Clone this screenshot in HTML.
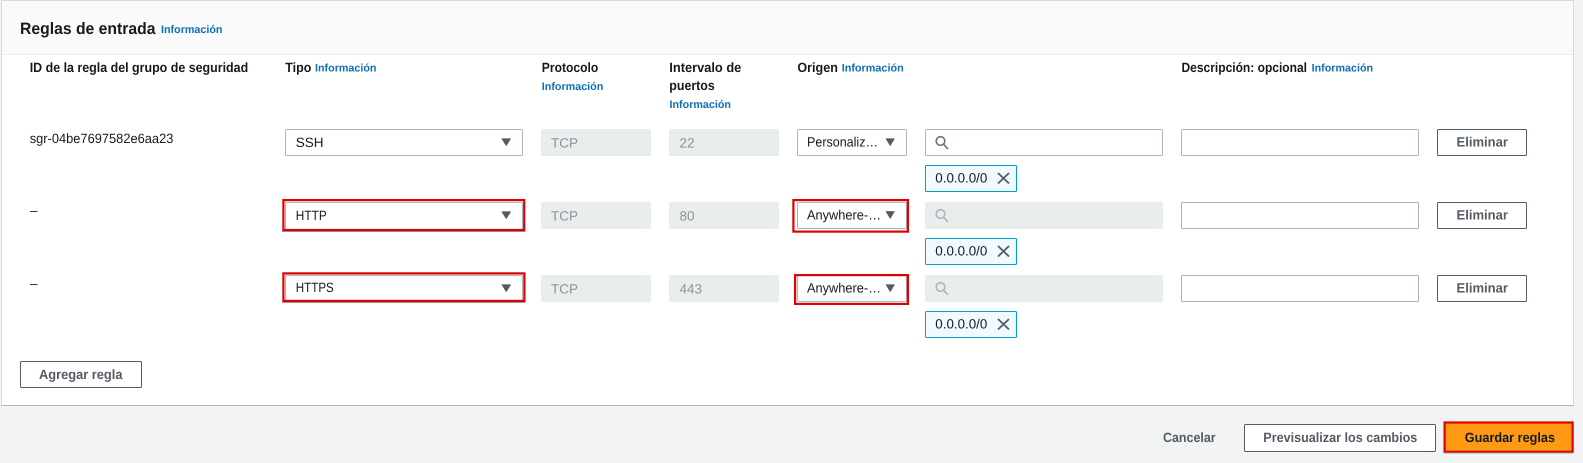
<!DOCTYPE html>
<html lang="es"><head><meta charset="utf-8"><title>Reglas de entrada</title>
<style>
html,body{margin:0;padding:0;width:1583px;height:463px;overflow:hidden;background:#f2f3f3}
svg{display:block}
text{font-family:"Liberation Sans",sans-serif;font-size:13.5px;fill:#16191f;text-rendering:geometricPrecision}
.b{font-weight:700}
.i{font-size:11px;font-weight:700;fill:#0f6fb5}
.d{fill:#879596}
.btn{font-weight:700;fill:#545b64}
.box{fill:#fff;stroke:#aab7b8;stroke-width:1}
.dis{fill:#eaeded}
.bt{fill:#fff;stroke:#545b64;stroke-width:1}
.red{fill:none;stroke:#df0000;stroke-width:2.2}
.chip{fill:#f1faff;stroke:#00a1c9;stroke-width:1}
.x{stroke:#545b64;stroke-width:1.8;fill:none}
.s{fill:none;stroke:#687078;stroke-width:1.6}
.sd{fill:none;stroke:#aab7b8;stroke-width:1.6}
.a{fill:#545b64;stroke:#545b64;stroke-width:.8;stroke-linejoin:round}
</style></head><body>
<svg width="1583" height="463" viewBox="0 0 1583 463" xmlns="http://www.w3.org/2000/svg">
<rect width="1583" height="463" fill="#f2f3f3"/>
<rect x="1.5" y="0.5" width="1572" height="405" fill="#fff" stroke="#d5dbdb"/>
<rect x="2" y="1" width="1571" height="53.5" fill="#fafafa"/>
<rect x="2" y="54" width="1571" height="1" fill="#eaeded"/>
<rect x="1" y="405" width="1573" height="1" fill="#aab7b8"/>

<text x="20" y="34" class="b" style="font-size:16.5px" textLength="135.5" lengthAdjust="spacingAndGlyphs">Reglas de entrada</text>
<text x="161" y="33" class="i" textLength="61.5" lengthAdjust="spacingAndGlyphs">Información</text>

<text x="29.7" y="72" class="b" textLength="218.5" lengthAdjust="spacingAndGlyphs">ID de la regla del grupo de seguridad</text>
<text x="285.3" y="72" class="b" textLength="26" lengthAdjust="spacingAndGlyphs">Tipo</text>
<text x="315" y="71.5" class="i" textLength="61.5" lengthAdjust="spacingAndGlyphs">Información</text>
<text x="541.8" y="72" class="b" textLength="56.5" lengthAdjust="spacingAndGlyphs">Protocolo</text>
<text x="541.8" y="90" class="i" textLength="61.5" lengthAdjust="spacingAndGlyphs">Información</text>
<text x="669.3" y="72" class="b" textLength="72" lengthAdjust="spacingAndGlyphs">Intervalo de</text>
<text x="669.3" y="90" class="b" textLength="45.5" lengthAdjust="spacingAndGlyphs">puertos</text>
<text x="669.5" y="108" class="i" textLength="61.5" lengthAdjust="spacingAndGlyphs">Información</text>
<text x="797.4" y="72" class="b" textLength="40.5" lengthAdjust="spacingAndGlyphs">Origen</text>
<text x="841.7" y="71.5" class="i" textLength="62" lengthAdjust="spacingAndGlyphs">Información</text>
<text x="1181.5" y="72" class="b" textLength="125.5" lengthAdjust="spacingAndGlyphs">Descripción: opcional</text>
<text x="1311.6" y="71.5" class="i" textLength="61.5" lengthAdjust="spacingAndGlyphs">Información</text>

<!-- Row 1 -->
<text x="29.7" y="143" textLength="143.7" lengthAdjust="spacingAndGlyphs">sgr-04be7697582e6aa23</text>
<rect x="285.5" y="129.5" width="237" height="26" rx="1" class="box"/>
<text x="295.8" y="147">SSH</text>
<path d="M502 138.800h8.500l-4.250 6.800z" class="a"/>
<rect x="541" y="129" width="110" height="27" rx="1" class="dis"/>
<text x="551" y="147.500" class="d">TCP</text>
<rect x="669" y="129" width="110" height="27" rx="1" class="dis"/>
<text x="679.500" y="147.500" class="d">22</text>
<rect x="797.500" y="129.500" width="109" height="26" rx="1" class="box"/>
<text x="807" y="146.500" textLength="71" lengthAdjust="spacingAndGlyphs">Personaliz…</text>
<path d="M886.200 138.800h8l-4 6.800z" class="a"/>
<rect x="925.500" y="129.500" width="237" height="26" rx="1" class="box"/>
<circle cx="940.500" cy="141" r="4.300" class="s"/><path d="M943.700 144.300L948 149" class="s"/>
<rect x="925.500" y="165.500" width="91" height="26" rx="1" class="chip"/>
<text x="935.300" y="182.500" textLength="52" lengthAdjust="spacingAndGlyphs">0.0.0.0/0</text>
<path d="M998 173l11 10.500M1009 173l-11 10.500" class="x"/>
<rect x="1181.500" y="129.500" width="237" height="26" rx="1" class="box"/>
<rect x="1437.500" y="129.500" width="89" height="26" rx="1" class="bt"/>
<text x="1456.500" y="146.500" class="btn" textLength="51.500" lengthAdjust="spacingAndGlyphs">Eliminar</text>

<!-- Row 2 -->
<text x="30" y="215">–</text>
<rect x="285.500" y="202.500" width="237" height="27" rx="1" class="box"/>
<text x="295.800" y="220" textLength="31" lengthAdjust="spacingAndGlyphs">HTTP</text>
<path d="M502 211.800h8.500l-4.250 6.800z" class="a"/>
<rect x="282" y="231" width="243.500" height="1" fill="#8d9797"/>
<rect x="283.400" y="200.100" width="240.800" height="29.900" class="red"/>
<rect x="541" y="202" width="110" height="27" rx="1" class="dis"/>
<text x="551" y="220.500" class="d">TCP</text>
<rect x="669" y="202" width="110" height="27" rx="1" class="dis"/>
<text x="679.500" y="220.500" class="d">80</text>
<rect x="797.500" y="202.500" width="109" height="26" rx="1" class="box"/>
<text x="807" y="219.500" textLength="74" lengthAdjust="spacingAndGlyphs">Anywhere-…</text>
<path d="M886.200 211.500h8l-4 6.800z" class="a"/>
<rect x="793.400" y="200.100" width="114.500" height="31.500" class="red"/>
<rect x="925" y="202" width="238" height="27" rx="1" class="dis"/>
<circle cx="940.500" cy="214" r="4.300" class="sd"/><path d="M943.700 217.300L948 222" class="sd"/>
<rect x="925.500" y="238.500" width="91" height="26" rx="1" class="chip"/>
<text x="935.300" y="255.500" textLength="52" lengthAdjust="spacingAndGlyphs">0.0.0.0/0</text>
<path d="M998 246l11 10.500M1009 246l-11 10.500" class="x"/>
<rect x="1181.500" y="202.500" width="237" height="26" rx="1" class="box"/>
<rect x="1437.500" y="202.500" width="89" height="26" rx="1" class="bt"/>
<text x="1456.500" y="219.500" class="btn" textLength="51.500" lengthAdjust="spacingAndGlyphs">Eliminar</text>

<!-- Row 3 -->
<text x="30" y="288">–</text>
<rect x="285.500" y="275.500" width="237" height="25" rx="1" class="box"/>
<text x="295.800" y="292" textLength="38" lengthAdjust="spacingAndGlyphs">HTTPS</text>
<path d="M502 284.800h8.500l-4.250 6.800z" class="a"/>
<rect x="282" y="302" width="243.500" height="1" fill="#8d9797"/>
<rect x="283.400" y="273.400" width="241" height="27.500" class="red"/>
<rect x="541" y="275" width="110" height="27" rx="1" class="dis"/>
<text x="551" y="293.500" class="d">TCP</text>
<rect x="669" y="275" width="110" height="27" rx="1" class="dis"/>
<text x="679.500" y="293.500" class="d">443</text>
<rect x="797.500" y="275.500" width="109" height="26" rx="1" class="box"/>
<text x="807" y="292.500" textLength="74" lengthAdjust="spacingAndGlyphs">Anywhere-…</text>
<path d="M886.200 284.800h8l-4 6.800z" class="a"/>
<rect x="795.100" y="275.100" width="112.800" height="28.800" class="red"/>
<rect x="925" y="275" width="238" height="27" rx="1" class="dis"/>
<circle cx="940.500" cy="287" r="4.300" class="sd"/><path d="M943.700 290.300L948 295" class="sd"/>
<rect x="925.500" y="311.500" width="91" height="26" rx="1" class="chip"/>
<text x="935.300" y="328.500" textLength="52" lengthAdjust="spacingAndGlyphs">0.0.0.0/0</text>
<path d="M998 319l11 10.500M1009 319l-11 10.500" class="x"/>
<rect x="1181.500" y="275.500" width="237" height="26" rx="1" class="box"/>
<rect x="1437.500" y="275.500" width="89" height="26" rx="1" class="bt"/>
<text x="1456.500" y="292.500" class="btn" textLength="51.500" lengthAdjust="spacingAndGlyphs">Eliminar</text>

<!-- Add rule -->
<rect x="20.500" y="361.500" width="121" height="26" rx="1" class="bt"/>
<text x="39" y="379" class="btn" textLength="83.500" lengthAdjust="spacingAndGlyphs">Agregar regla</text>

<!-- Footer -->
<text x="1163" y="442" class="btn" textLength="52.600" lengthAdjust="spacingAndGlyphs">Cancelar</text>
<rect x="1244.500" y="424.500" width="191" height="27" rx="1" class="bt"/>
<text x="1263.300" y="442" class="btn" textLength="154" lengthAdjust="spacingAndGlyphs">Previsualizar los cambios</text>
<rect x="1444" y="422" width="129" height="30" fill="#ff9a12"/>
<rect x="1444.600" y="422.500" width="128" height="29.300" class="red"/>
<rect x="1444" y="452.500" width="129" height="1" fill="#9a9f9f"/>
<text x="1464.800" y="442" class="b" textLength="90.200" lengthAdjust="spacingAndGlyphs">Guardar reglas</text>
</svg>
</body></html>
